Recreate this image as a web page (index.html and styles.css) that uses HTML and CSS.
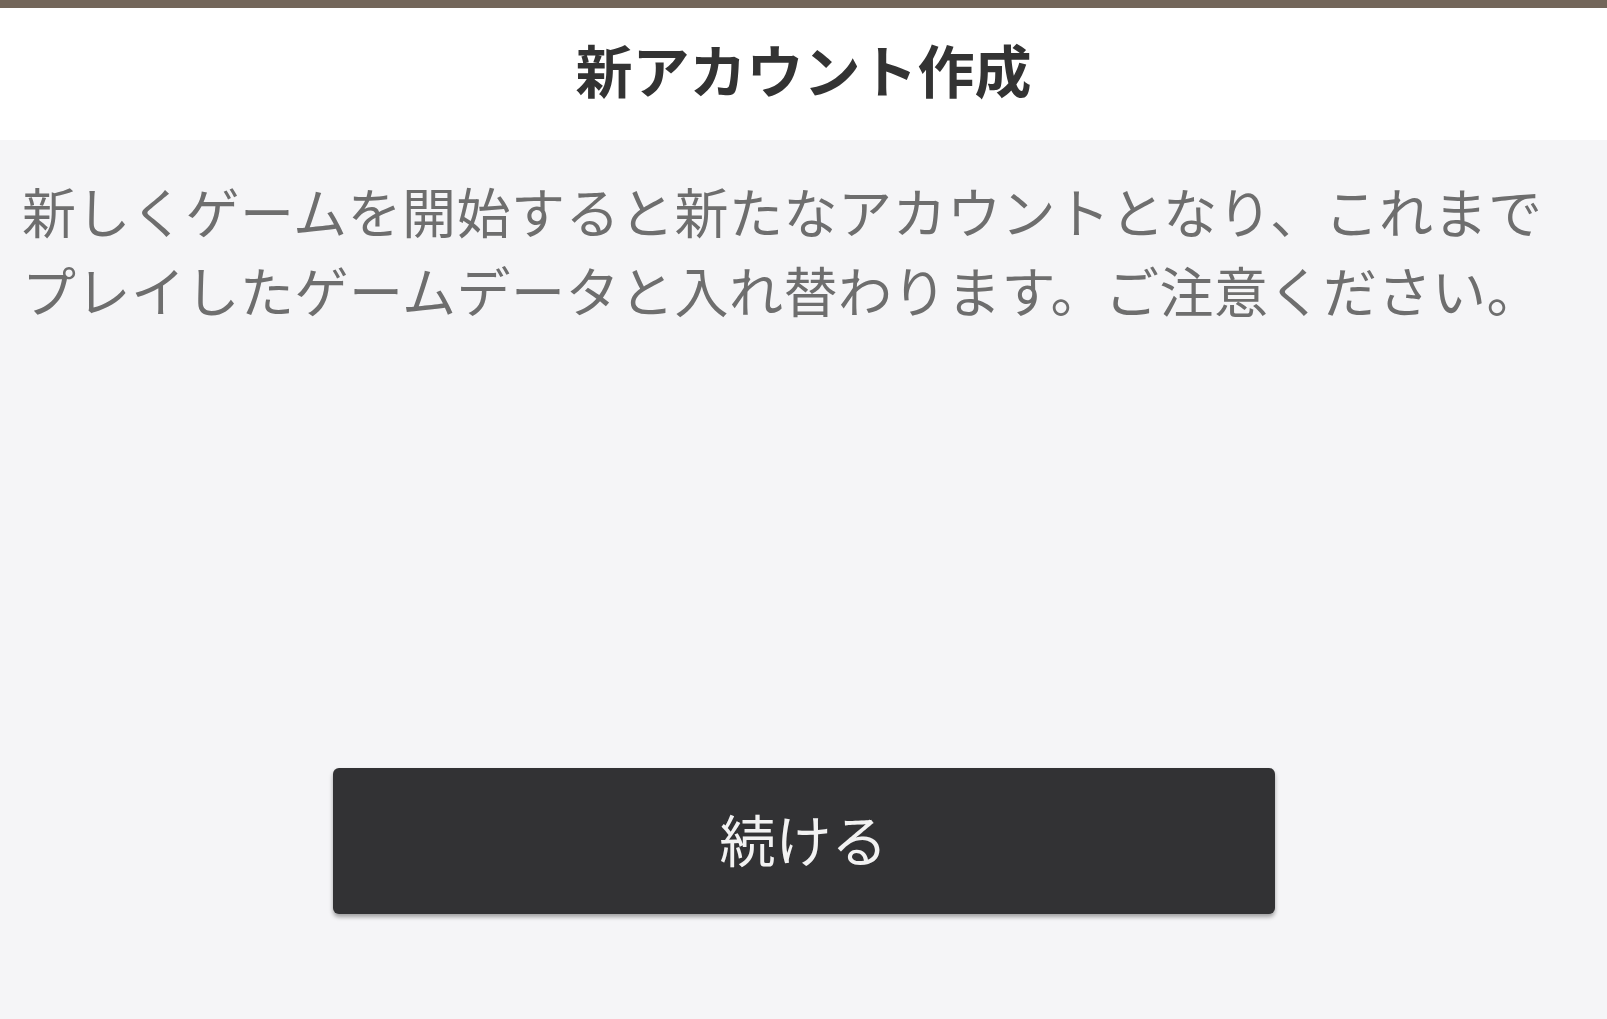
FILE: index.html
```html
<!DOCTYPE html>
<html lang="ja">
<head>
<meta charset="utf-8">
<title>新アカウント作成</title>
<link rel="stylesheet" href="styles.css">
</head>
<body>
<div class="screen">
  <header class="header">
    <h1 class="title">新アカウント作成</h1>
  </header>
  <main class="content">
    <p class="message">新しくゲームを開始すると新たなアカウントとなり、これまでプレイしたゲームデータと入れ替わります。ご注意ください。</p>
    <div class="actions">
      <button class="btn-continue" type="button">続ける</button>
    </div>
  </main>
</div>
</body>
</html>
```
FILE: styles.css
```css
html, body {
  margin: 0;
  padding: 0;
  height: 100%;
}
body {
  background: #f5f5f7;
  font-family: "Noto Sans CJK JP", "Noto Sans", sans-serif;
  overflow: hidden;
}
.screen {
  display: flex;
  flex-direction: column;
  min-height: 100vh;
}
.header {
  background: #ffffff;
  border-top: 8px solid #73665a;
  height: 140px;
  padding-bottom: 12px;
  box-sizing: border-box;
  display: flex;
  align-items: center;
  justify-content: center;
}
.title {
  margin: 0;
  font-size: 57px;
  font-weight: 700;
  color: #333333;
  line-height: 1;
}
.content {
  flex: 1;
  padding: 31px 22px 0 22px;
}
.message {
  margin: 0;
  font-size: 54px;
  letter-spacing: 0.5px;
  line-height: 79px;
  color: #6e6e6e;
}
.actions {
  display: flex;
  justify-content: center;
  margin-top: 439px;
}
.btn-continue {
  width: 942px;
  height: 146px;
  padding: 0 0 8px 0;
  border: none;
  border-radius: 6px;
  background: #323234;
  color: #f2f2f2;
  font-family: "Noto Sans CJK JP", "Noto Sans", sans-serif;
  font-size: 56px;
  font-weight: 400;
  box-shadow: 0 3px 4px rgba(0, 0, 0, 0.35);
  cursor: pointer;
}
```
